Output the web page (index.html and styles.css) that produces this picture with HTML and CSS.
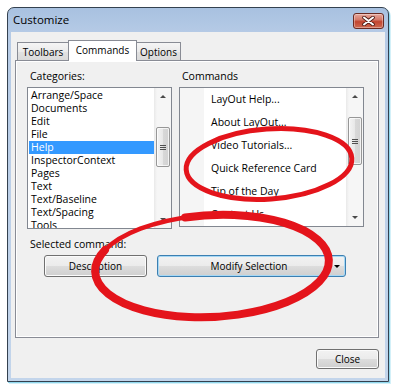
FILE: index.html
```html
<!DOCTYPE html>
<html>
<head>
<meta charset="utf-8">
<link rel="stylesheet" href="styles.css">
</head>
<body>
<div class="window">
  <div class="titlebar">
    <span class="title">Customize</span>
    <span class="close-x">
      <svg width="13" height="10" viewBox="0 0 13 10"><path d="M2 1.5 L11 8.5 M11 1.5 L2 8.5" stroke="#4a1a14" stroke-width="3.6" stroke-linecap="round"/><path d="M2 1.5 L11 8.5 M11 1.5 L2 8.5" stroke="#fff" stroke-width="2" stroke-linecap="round"/></svg>
    </span>
  </div>
  <div class="client">
    <div class="tabs">
      <div class="tab tab-toolbars">Toolbars</div>
      <div class="tab tab-commands active">Commands</div>
      <div class="tab tab-options">Options</div>
    </div>
    <div class="panel">
      <div class="columns">
        <div class="col col-cat">
          <div class="label">Categories:</div>
          <div class="listbox listbox-cat">
            <ul class="items">
              <li>Arrange/Space</li>
              <li>Documents</li>
              <li>Edit</li>
              <li>File</li>
              <li class="sel">Help</li>
              <li>InspectorContext</li>
              <li>Pages</li>
              <li>Text</li>
              <li>Text/Baseline</li>
              <li>Text/Spacing</li>
              <li>Tools</li>
            </ul>
            <div class="scrollbar">
              <div class="sb-btn"><span class="tri-up"></span></div>
              <div class="sb-track"><div class="thumb thumb-cat"><span class="grip"></span></div></div>
              <div class="sb-btn"><span class="tri-down"></span></div>
            </div>
          </div>
        </div>
        <div class="col col-cmd">
          <div class="label">Commands</div>
          <div class="listbox listbox-cmd">
            <div class="gutter"></div>
            <ul class="items cmd-items">
              <li>LayOut Help...</li>
              <li>About LayOut...</li>
              <li>Video Tutorials...</li>
              <li>Quick Reference Card</li>
              <li>Tip of the Day</li>
              <li>Contact Us</li>
            </ul>
            <div class="scrollbar">
              <div class="sb-btn"><span class="tri-up"></span></div>
              <div class="sb-track"><div class="thumb thumb-cmd"><span class="grip"></span></div></div>
              <div class="sb-btn"><span class="tri-down"></span></div>
            </div>
          </div>
        </div>
      </div>
      <div class="label label-selected">Selected command:</div>
      <div class="btnrow">
        <div class="btn btn-desc">Description</div>
        <div class="btn btn-modify"><span class="btn-text">Modify Selection</span><span class="tri-down dark"></span></div>
      </div>
    </div>
    <div class="footer">
      <div class="btn btn-close">Close</div>
    </div>
  </div>
</div>
<svg class="marks" width="395" height="384" viewBox="0 0 395 384">
  <g fill="none" stroke="#e4141b" stroke-linecap="round">
    <g transform="rotate(-4 269 164)">
      <ellipse cx="269" cy="164" rx="83" ry="35" stroke-width="5"/>
    </g>
    <g transform="rotate(-3 212 266)">
      <path d="M187.7 216.1 A117 51 0 1 1 106.0 244.4" stroke-width="8"/>
      <path d="M106.0 244.4 A117 51 0 0 1 195.7 215.5" stroke-width="4.5"/>
    </g>
  </g>
</svg>
</body>
</html>
```

FILE: styles.css
```css
* { box-sizing: border-box; }
html, body { margin: 0; padding: 0; }
body {
  width: 395px;
  height: 384px;
  overflow: hidden;
  position: relative;
  background: #ffffff;
  font-family: "Open Sans", "Noto Sans", sans-serif;
  font-size: 10.5px;
  color: #000;
  padding: 7px 0 0 7px;
}
ul { list-style: none; margin: 0; padding: 0; }

.window {
  width: 382px;
  height: 375px;
  border: 1px solid #34414f;
  border-radius: 7px 7px 0 0;
  background: linear-gradient(#a8c1e0, #b6cbe6 26px, #c3d5eb);
  display: flex;
  flex-direction: column;
  box-shadow: 1px 1px 0 #8fd6ec, 2px 2px 0 #d3f0f8;
}

.titlebar {
  height: 24px;
  display: flex;
  justify-content: space-between;
  align-items: flex-start;
  padding: 0 4px 0 5px;
}
.title {
  font-size: 11.5px;
  line-height: 24px;
  color: #000;
}
.close-x {
  margin-top: 5px;
  width: 31px;
  height: 16px;
  border: 1px solid #6a2a22;
  border-radius: 3px;
  background: linear-gradient(#e6a79c, #d57a6a 40%, #c2452f 55%, #cf6a52);
  box-shadow: inset 0 0 0 1px rgba(255,255,255,0.35);
  display: flex;
  align-items: center;
  justify-content: center;
}

.client {
  flex: 1;
  margin: 0 3px 3px 3px;
  background: #f0f0f0;
  padding: 8px 6px 0 4px;
  display: flex;
  flex-direction: column;
}

.tabs {
  height: 20px;
  display: flex;
  align-items: flex-end;
  margin-left: 2px;
}
.tab {
  height: 18px;
  border: 1px solid #898c95;
  border-bottom: none;
  background: linear-gradient(#f5f5f5, #ebebeb 50%, #e2e2e2 50%, #dadada);
  font-size: 10px;
  line-height: 18px;
  text-align: center;
}
.tab-toolbars { width: 52px; }
.tab-commands { width: 69px; margin-left: -1px; }
.tab-options { width: 45px; margin-left: -1px; }
.tab.active {
  height: 21px;
  margin-bottom: -1px;
  background: #ffffff;
  line-height: 19px;
  position: relative;
  z-index: 1;
}

.panel {
  height: 278px;
  border: 1px solid #898c95;
  background: #f0f0f0;
  box-shadow: inset 0 0 0 1px #ffffff;
  padding: 9px 14px 0 11px;
}

.columns {
  display: flex;
  gap: 7px;
}
.col-cat { width: 145px; }
.col-cmd { width: 185px; }

.label {
  height: 13px;
  line-height: 13px;
  padding-left: 3px;
  margin-bottom: 4px;
}

.listbox {
  border: 1px solid #828790;
  background: #ffffff;
  display: flex;
  overflow: hidden;
}
.listbox-cat { height: 142px; }
.listbox-cmd { height: 140px; }

.items {
  flex: 1;
  padding: 0 0 0 1px;
  overflow: hidden;
}
.listbox-cat .items li {
  height: 13px;
  line-height: 13px;
  padding-left: 2px;
  white-space: nowrap;
}
.listbox-cat .items li:first-child { margin-top: 1px; }
.items li.sel {
  background: #3399ff;
  color: #ffffff;
}

.gutter {
  width: 24px;
  background: #f5f5f5;
}
.cmd-items { padding-left: 7px; }
.cmd-items li {
  height: 23px;
  line-height: 23px;
  white-space: nowrap;
}

.scrollbar {
  width: 17px;
  display: flex;
  flex-direction: column;
  background: linear-gradient(to right, #e9e9e9, #f6f6f6 3px, #f6f6f6);
}
.sb-btn {
  height: 17px;
  display: flex;
  align-items: center;
  justify-content: center;
}
.sb-track {
  flex: 1;
  display: flex;
  flex-direction: column;
  align-items: center;
}
.thumb {
  width: 14px;
  border: 1px solid #979797;
  border-radius: 2px;
  background: linear-gradient(to right, #f4f4f4, #e7e7e7 50%, #d8d8d8 50%, #d2d2d2);
  box-shadow: inset 0 0 0 1px rgba(255,255,255,0.7);
  display: flex;
  align-items: center;
  justify-content: center;
}
.thumb-cat { margin-top: 22px; height: 40px; }
.thumb-cmd { margin-top: 12px; height: 48px; }
.grip {
  width: 6px;
  height: 5px;
  border-top: 1px solid #505050;
  border-bottom: 1px solid #505050;
  background: linear-gradient(#505050, #505050) center / 6px 1px no-repeat;
}
.tri-up {
  width: 0; height: 0;
  border-left: 3px solid transparent;
  border-right: 3px solid transparent;
  border-bottom: 3px solid #4a4a4a;
}
.tri-down {
  width: 0; height: 0;
  border-left: 3px solid transparent;
  border-right: 3px solid transparent;
  border-top: 3px solid #4a4a4a;
}
.tri-down.dark { border-top-color: #000; margin-right: 5px; }

.label-selected { margin-top: 9px; }

.btnrow {
  display: flex;
  gap: 10px;
  margin-top: 3px;
  padding-left: 17px;
}
.btn {
  height: 22px;
  border: 1px solid #707070;
  border-radius: 3px;
  background: linear-gradient(#f2f2f2, #ebebeb 50%, #dddddd 50%, #cfcfcf);
  box-shadow: inset 0 0 0 1px #fbfbfb;
  display: flex;
  align-items: center;
  justify-content: center;
  font-size: 10px;
}
.btn-desc { width: 103px; }
.btn-modify {
  width: 189px;
  border-color: #3c7fb1;
  box-shadow: inset 0 0 0 1px #a6d8f5;
}
.btn-text { flex: 1; text-align: center; padding-left: 6px; }

.footer {
  display: flex;
  justify-content: flex-end;
  margin-top: 11px;
}
.btn-close {
  width: 63px;
  height: 20px;
}

.marks {
  position: absolute;
  left: 0;
  top: 0;
  pointer-events: none;
}
```
